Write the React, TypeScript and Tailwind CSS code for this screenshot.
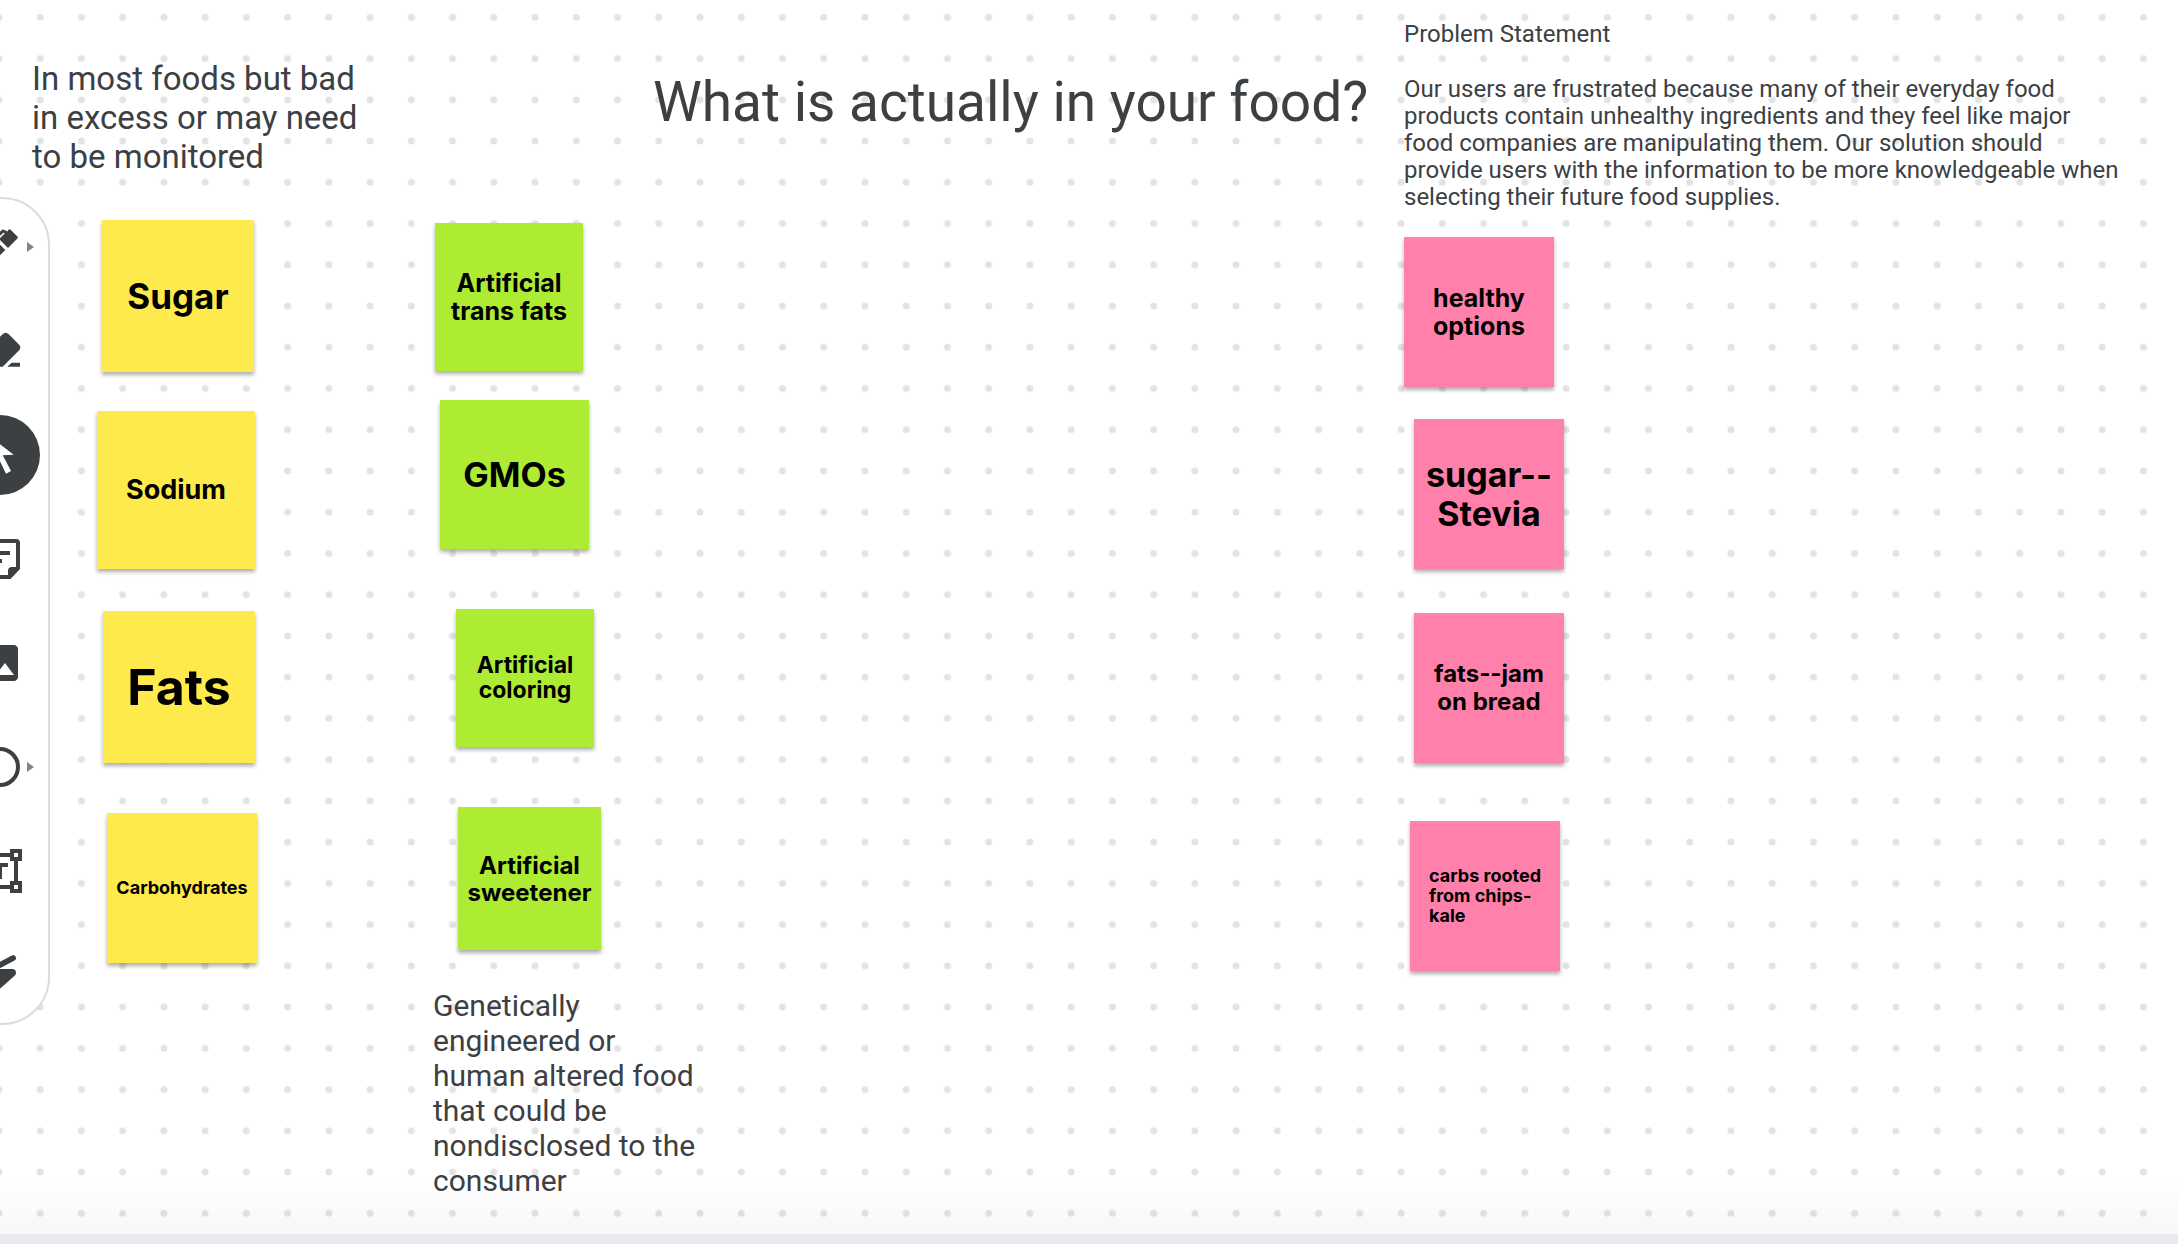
import type { ReactNode } from "react";

type Note = { text: string[]; box: string; type: string };

const YELLOW = "bg-[#ffea4d]";
const GREEN = "bg-[#aeeb33]";
const PINK = "bg-[#ff80ab]";

const groups: { name: string; color: string; notes: Note[] }[] = [
  {
    name: "Common ingredients",
    color: YELLOW,
    notes: [
      { text: ["Sugar"], box: "left-[102px] top-[220px] size-[152px]", type: "text-[35px] leading-[39px]" },
      { text: ["Sodium"], box: "left-[97px] top-[411px] size-[158px]", type: "text-[27px] leading-[28px]" },
      { text: ["Fats"], box: "left-[103px] top-[611px] size-[152px]", type: "text-[50px] leading-[56px]" },
      { text: ["Carbohydrates"], box: "left-[107px] top-[813px] size-[150px]", type: "text-[18px] leading-[20px]" },
    ],
  },
  {
    name: "Engineered ingredients",
    color: GREEN,
    notes: [
      { text: ["Artificial", "trans fats"], box: "left-[435px] top-[223px] size-[148px]", type: "text-[25px] leading-[28px]" },
      { text: ["GMOs"], box: "left-[440px] top-[400px] size-[149px]", type: "text-[34px] leading-[39px]" },
      { text: ["Artificial", "coloring"], box: "left-[456px] top-[609px] size-[138px]", type: "text-[23px] leading-[25px]" },
      { text: ["Artificial", "sweetener"], box: "left-[458px] top-[807px] size-[143px]", type: "text-[24px] leading-[27px]" },
    ],
  },
  {
    name: "Healthy options",
    color: PINK,
    notes: [
      { text: ["healthy", "options"], box: "left-[1404px] top-[237px] size-[150px]", type: "text-[25px] leading-[28px]" },
      { text: ["sugar--", "Stevia"], box: "left-[1414px] top-[419px] size-[150px]", type: "text-[34px] leading-[39px]" },
      { text: ["fats--jam", "on bread"], box: "left-[1414px] top-[613px] size-[150px]", type: "text-[24px] leading-[28px]" },
      { text: ["carbs rooted", "from chips-", "kale"], box: "left-[1410px] top-[821px] size-[150px]", type: "text-[18px] leading-[20px]" },
    ],
  },
];

function DotGrid() {
  return (
    <svg className="absolute inset-0 h-full w-full" aria-hidden="true">
      <defs>
        <pattern id="dots" x="-21.7" y="-3.3" width="41.24" height="41.24" patternUnits="userSpaceOnUse">
          <circle cx="20.62" cy="20.62" r="3.5" fill="#e3e3e3" />
        </pattern>
      </defs>
      <rect width="100%" height="100%" fill="url(#dots)" />
    </svg>
  );
}

function StickyNote({ note, color }: { note: Note; color: string }) {
  const align = note.text.length > 2 ? "text-left" : "text-center";
  return (
    <li
      className={`absolute flex items-center justify-center font-bold text-black shadow-[0_3px_4px_rgba(0,0,0,0.32)] ${align} ${color} ${note.box} ${note.type}`}
    >
      <p>
        {note.text.map((line) => (
          <span key={line} className="block whitespace-nowrap">
            {line}
          </span>
        ))}
      </p>
    </li>
  );
}

function Icon({ children }: { children: ReactNode }) {
  return (
    <svg viewBox="0 0 48 48" className="size-12" fill="currentColor" aria-hidden="true">
      {children}
    </svg>
  );
}

const tools: { label: string; expands?: boolean; active?: boolean; icon: ReactNode }[] = [
  {
    label: "Pen",
    expands: true,
    icon: (
      <Icon>
        <path d="M34.4 6.6 41.4 13.6Q42.3 14.6 41.4 15.6L32 25 22 15 24.4 12.2 27.2 9.6 29.4 7.2 31.2 8.4 32.6 6.7Q33.5 5.9 34.4 6.6Z" />
        <path d="M20 13 25.6 7.2Q27 5.6 28.6 7.2L30 8.6 18 20Z" />
        <path d="M29.8 26.4 14 42H6V34L20.6 18Z" />
        <path d="M21 17 26 12 28.2 10.2" fill="none" stroke="#fff" strokeWidth="1.6" />
        <path d="M21 17.8 30.8 27" fill="none" stroke="#fff" strokeWidth="1.8" />
      </Icon>
    ),
  },
  {
    label: "Erase",
    icon: (
      <Icon>
        <path d="M26.6 7.2 10 24Q6.4 27.6 10 31.2L18.4 39.7H26.7L43.4 23Q45.2 20.5 43.4 18L32.8 7.2Q29.7 4.2 26.6 7.2Z" />
        <path d="M31.3 39.7 35.6 35.7H44V39.7Z" />
      </Icon>
    ),
  },
  {
    label: "Select",
    active: true,
    icon: (
      <Icon>
        <path d="M13 5 37.7 23.7 26.7 24.3 35 40 30 42.7 22.4 27 13 35Z" />
      </Icon>
    ),
  },
  {
    label: "Sticky note",
    icon: (
      <Icon>
        <path d="M8 4H40Q44 4 44 8V34L34.5 44H8Q4 44 4 40V8Q4 4 8 4ZM8 8V40H32V36Q32 32 36 32H40V8Z" fillRule="evenodd" />
        <path d="M14 16H34V20H14ZM14 24H26V28H14Z" />
      </Icon>
    ),
  },
  {
    label: "Add image",
    icon: (
      <Icon>
        <path d="M42 38V10c0-2.2-1.8-4-4-4H10c-2.2 0-4 1.8-4 4v28c0 2.2 1.8 4 4 4h28c2.2 0 4-1.8 4-4zM17 27l5 6.02L29 24l9 12H10l7-9z" />
      </Icon>
    ),
  },
  {
    label: "Shape",
    expands: true,
    icon: (
      <Icon>
        <circle cx="24" cy="24" r="18" fill="none" stroke="currentColor" strokeWidth="4" />
      </Icon>
    ),
  },
  {
    label: "Text box",
    icon: (
      <Icon>
        <path d="M8 8H40V40H8Z" fill="none" stroke="currentColor" strokeWidth="4" />
        {[8, 40].map((x) =>
          [8, 40].map((y) => (
            <rect key={`${x}-${y}`} x={x - 4} y={y - 4} width="8" height="8" fill="#fff" stroke="currentColor" strokeWidth="4" />
          )),
        )}
        <path d="M16 16H32V20H26V32H22V20H16Z" />
      </Icon>
    ),
  },
  {
    label: "Laser",
    icon: (
      <Icon>
        <path d="M37.2 7 10 21.4" fill="none" stroke="currentColor" strokeWidth="5.6" strokeLinecap="round" />
        <path d="M10 18H37Q40 18.4 40 22 40 23.4 38.6 24.8L24 37.8 12 46Z" />
        <path d="M22 17.4H28" stroke="#fff" strokeWidth="0.8" />
      </Icon>
    ),
  },
];

function Toolbar() {
  return (
    <nav
      aria-label="Drawing tools"
      className="absolute -left-[50px] top-[197px] flex flex-col gap-6 rounded-[48px] border-2 border-[#dadce0] bg-white px-2 py-2 text-[#3c4043]"
    >
      {tools.map((tool) => (
        <button
          key={tool.label}
          type="button"
          aria-label={tool.label}
          className={
            tool.active
              ? "relative flex size-20 items-center justify-center rounded-full bg-[#3c4043] text-white"
              : "relative flex size-20 items-center justify-center rounded-full"
          }
        >
          {tool.icon}
          {tool.expands && (
            <svg viewBox="0 0 7 10" className="absolute right-1.5 h-2.5 w-[7px] text-[#80868b]" fill="currentColor" aria-hidden="true">
              <path d="M0 0 7 5 0 10Z" />
            </svg>
          )}
        </button>
      ))}
    </nav>
  );
}

export default function App() {
  return (
    <div className="flex min-h-screen flex-col overflow-hidden bg-white font-['Roboto',sans-serif] text-[#3c4043]">
      <main className="relative flex-1">
        <DotGrid />
        <div className="absolute inset-x-0 bottom-0 h-14 bg-gradient-to-b from-transparent to-black/3" />

        <h1 className="absolute left-[653px] top-[70px] whitespace-nowrap text-[55px] leading-[64px]">
          What is actually in your food?
        </h1>
        <p className="absolute left-[32px] top-[59px] w-[350px] text-[33px] leading-[39px]">
          In most foods but bad in excess or may need to be monitored
        </p>
        <p className="absolute left-[433px] top-[988px] w-[280px] text-[30px] leading-[35px]">
          Genetically engineered or human altered food that could be nondisclosed to the consumer
        </p>
        <section className="absolute left-[1404px] top-[21px] w-[717px] text-[24px] leading-[27px]">
          <h2>Problem Statement</h2>
          <p className="mt-7">
            Our users are frustrated because many of their everyday food products contain unhealthy ingredients and
            they feel like major food companies are manipulating them. Our solution should provide users with the
            information to be more knowledgeable when selecting their future food supplies.
          </p>
        </section>

        {groups.map((group) => (
          <ul key={group.name} aria-label={group.name} className="font-['Inter',sans-serif]">
            {group.notes.map((note) => (
              <StickyNote key={note.box} note={note} color={group.color} />
            ))}
          </ul>
        ))}

        <Toolbar />
      </main>
      <footer className="h-2.5 bg-[#e8eaed]" />
    </div>
  );
}
